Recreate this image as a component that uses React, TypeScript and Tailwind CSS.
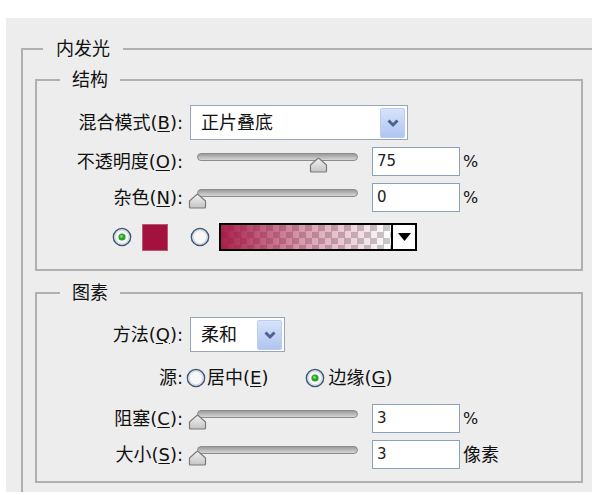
import React from "react";

const uiFont = "font-['DejaVu_Sans','Noto_Sans_CJK_SC',sans-serif]";
const numFont = "font-['DejaVu_Sans','Liberation_Sans',sans-serif]";

function Label({ text, k, tail = "):" }: { text: string; k?: string; tail?: string }) {
  return (
    <div className="w-[146px] shrink-0 text-right leading-none whitespace-nowrap">
      {text}
      {k && (
        <>
          (<span className="underline underline-offset-2">{k}</span>
          {tail}
        </>
      )}
    </div>
  );
}

function Legend({ text, className }: { text: string; className: string }) {
  return <legend className={`${className} leading-[26px] text-[18px]`}>{text}</legend>;
}

function Chevron() {
  return (
    <svg width="14" height="10" viewBox="0 0 14 10">
      <path d="M2.5 2.5 L7 7 L11.5 2.5" fill="none" stroke="#4a6490" strokeWidth="3" />
    </svg>
  );
}

function Select({ value, className }: { value: string; className: string }) {
  return (
    <div className={`${className} flex h-[35px] items-center border border-[#97a6bd] bg-white pl-[10px] pr-[2px]`}>
      <span className="leading-none">{value}</span>
      <div className="ml-auto flex h-[30px] w-[25px] items-center justify-center rounded-[2px] border border-[#bccdf0] bg-gradient-to-b from-[#d8e3fb] to-[#afc4f0]">
        <Chevron />
      </div>
    </div>
  );
}

function Thumb() {
  return (
    <svg width="19" height="16" viewBox="0 0 19 16">
      <defs>
        <linearGradient id="thumbFill" x1="0" y1="0" x2="0" y2="1">
          <stop offset="0" stopColor="#f2f2f2" />
          <stop offset="1" stopColor="#c4c4c4" />
        </linearGradient>
      </defs>
      <path
        d="M1.5 14 V8 L8.5 1.8 Q9.5 1 10.5 1.8 L17.5 8 V14 Q17.5 15 16.5 15 H2.5 Q1.5 15 1.5 14 Z"
        fill="url(#thumbFill)"
        stroke="#7a7a7a"
        strokeWidth="1.2"
      />
    </svg>
  );
}

function Slider({ pos }: { pos: number }) {
  return (
    <div className="relative ml-[5px] h-[29px] w-[178px] shrink-0">
      <div className="absolute left-[9px] right-[8px] top-[6px] h-[8px] rounded-full border border-[#8c8c8c] bg-gradient-to-b from-[#9a9a9a] via-[#b9b9b9] to-[#d6d6d6]" />
      <div className="absolute top-[10px]" style={{ left: Math.round(pos * 161) }}>
        <Thumb />
      </div>
    </div>
  );
}

function NumBox({ value }: { value: string }) {
  return (
    <div className={`${numFont} ml-[6px] flex h-[29px] w-[88px] shrink-0 items-center border border-[#8aa2bd] bg-white pl-[4px] text-[15px] text-[#222]`}>
      {value}
    </div>
  );
}

function Radio({ checked }: { checked?: boolean }) {
  return (
    <svg width="20" height="20" viewBox="0 0 20 20" className="shrink-0">
      <circle cx="10" cy="10" r="8.6" fill="#f7f7f7" stroke="#3c5878" strokeWidth="1.5" />
      <circle cx="10" cy="10" r="7" fill="none" stroke="#d2d6dc" strokeWidth="1.2" />
      {checked && (
        <>
          <circle cx="10" cy="10" r="3.6" fill="#2aa52a" />
          <circle cx="9.4" cy="9.4" r="1.4" fill="#7fd87f" />
        </>
      )}
    </svg>
  );
}

function SliderRow({ label, k, pos, value, unit }: { label: string; k: string; pos: number; value: string; unit: string }) {
  return (
    <div className="flex h-[29px] items-center">
      <Label text={label} k={k} />
      <Slider pos={pos} />
      <NumBox value={value} />
      <span className={`ml-[3px] ${unit === "%" ? "text-[16px]" : ""}`}>{unit}</span>
    </div>
  );
}

export default function App() {
  return (
    <div className={`${uiFont} h-[495px] w-[592px] overflow-hidden bg-white pl-[6px] pt-[18px] text-[18px] text-[#111]`}>
      <div className="h-[474px] overflow-hidden bg-[#ededed] pl-[15px] pt-[18px]">
        <fieldset className="w-[620px] border-2 border-[#b0b0b0] pb-[20px] pl-[12px]">
          <Legend text="内发光" className="ml-[8px] px-[13px]" />

          {/* 结构 */}
          <fieldset className="mt-[5px] w-[548px] border-2 border-[#b0b0b0] pb-[18px] pt-[12px]">
            <Legend text="结构" className="ml-[23px] px-[12px]" />

            <div className="flex h-[35px] items-center">
              <Label text="混合模式" k="B" />
              <Select value="正片叠底" className="ml-[7px] w-[218px]" />
            </div>

            <div className="mt-[7px]">
              <SliderRow label="不透明度" k="O" pos={0.75} value="75" unit="%" />
            </div>
            <div className="mt-[7px]">
              <SliderRow label="杂色" k="N" pos={0} value="0" unit="%" />
            </div>

            <div className="mt-[11px] flex h-[28px] items-center pl-[75px]">
              <Radio checked />
              <div className="ml-[10px] h-[27px] w-[26px] border border-[#b8597c] bg-[#a3113f]" />
              <div className="ml-[22px]">
                <Radio />
              </div>
              <div className="ml-[9px] flex h-[28px] w-[198px] border-2 border-black">
                <div className="flex-1 bg-[conic-gradient(#c9c9c9_25%,#ffffff_0_50%,#c9c9c9_0_75%,#ffffff_0)] bg-[length:13px_13px]">
                  <div className="h-full w-full bg-gradient-to-r from-[#a3113fee] via-[#a3113f66] to-[#a3113f00]" />
                </div>
                <div className="flex w-[24px] items-center justify-center border-l-2 border-black bg-white">
                  <svg width="13" height="8" viewBox="0 0 13 8">
                    <path d="M0 0 H13 L6.5 8 Z" fill="#000" />
                  </svg>
                </div>
              </div>
            </div>
          </fieldset>

          {/* 图素 */}
          <fieldset className="mt-[9px] w-[548px] border-2 border-[#b0b0b0] pb-[12px] pt-[11px]">
            <Legend text="图素" className="ml-[23px] px-[12px]" />

            <div className="flex h-[35px] items-center">
              <Label text="方法" k="Q" />
              <Select value="柔和" className="ml-[7px] w-[95px]" />
            </div>

            <div className="mt-[13px] flex h-[26px] items-center">
              <Label text="源:" />
              <div className="ml-[3px]">
                <Radio />
              </div>
              <span className="ml-[1px] leading-none">
                居中(<span className="underline underline-offset-2">E</span>)
              </span>
              <div className="ml-[37px]">
                <Radio checked />
              </div>
              <span className="ml-[3px] leading-none">
                边缘(<span className="underline underline-offset-2">G</span>)
              </span>
            </div>

            <div className="mt-[13px]">
              <SliderRow label="阻塞" k="C" pos={0} value="3" unit="%" />
            </div>
            <div className="mt-[7px]">
              <SliderRow label="大小" k="S" pos={0} value="3" unit="像素" />
            </div>
          </fieldset>
        </fieldset>
      </div>
    </div>
  );
}
